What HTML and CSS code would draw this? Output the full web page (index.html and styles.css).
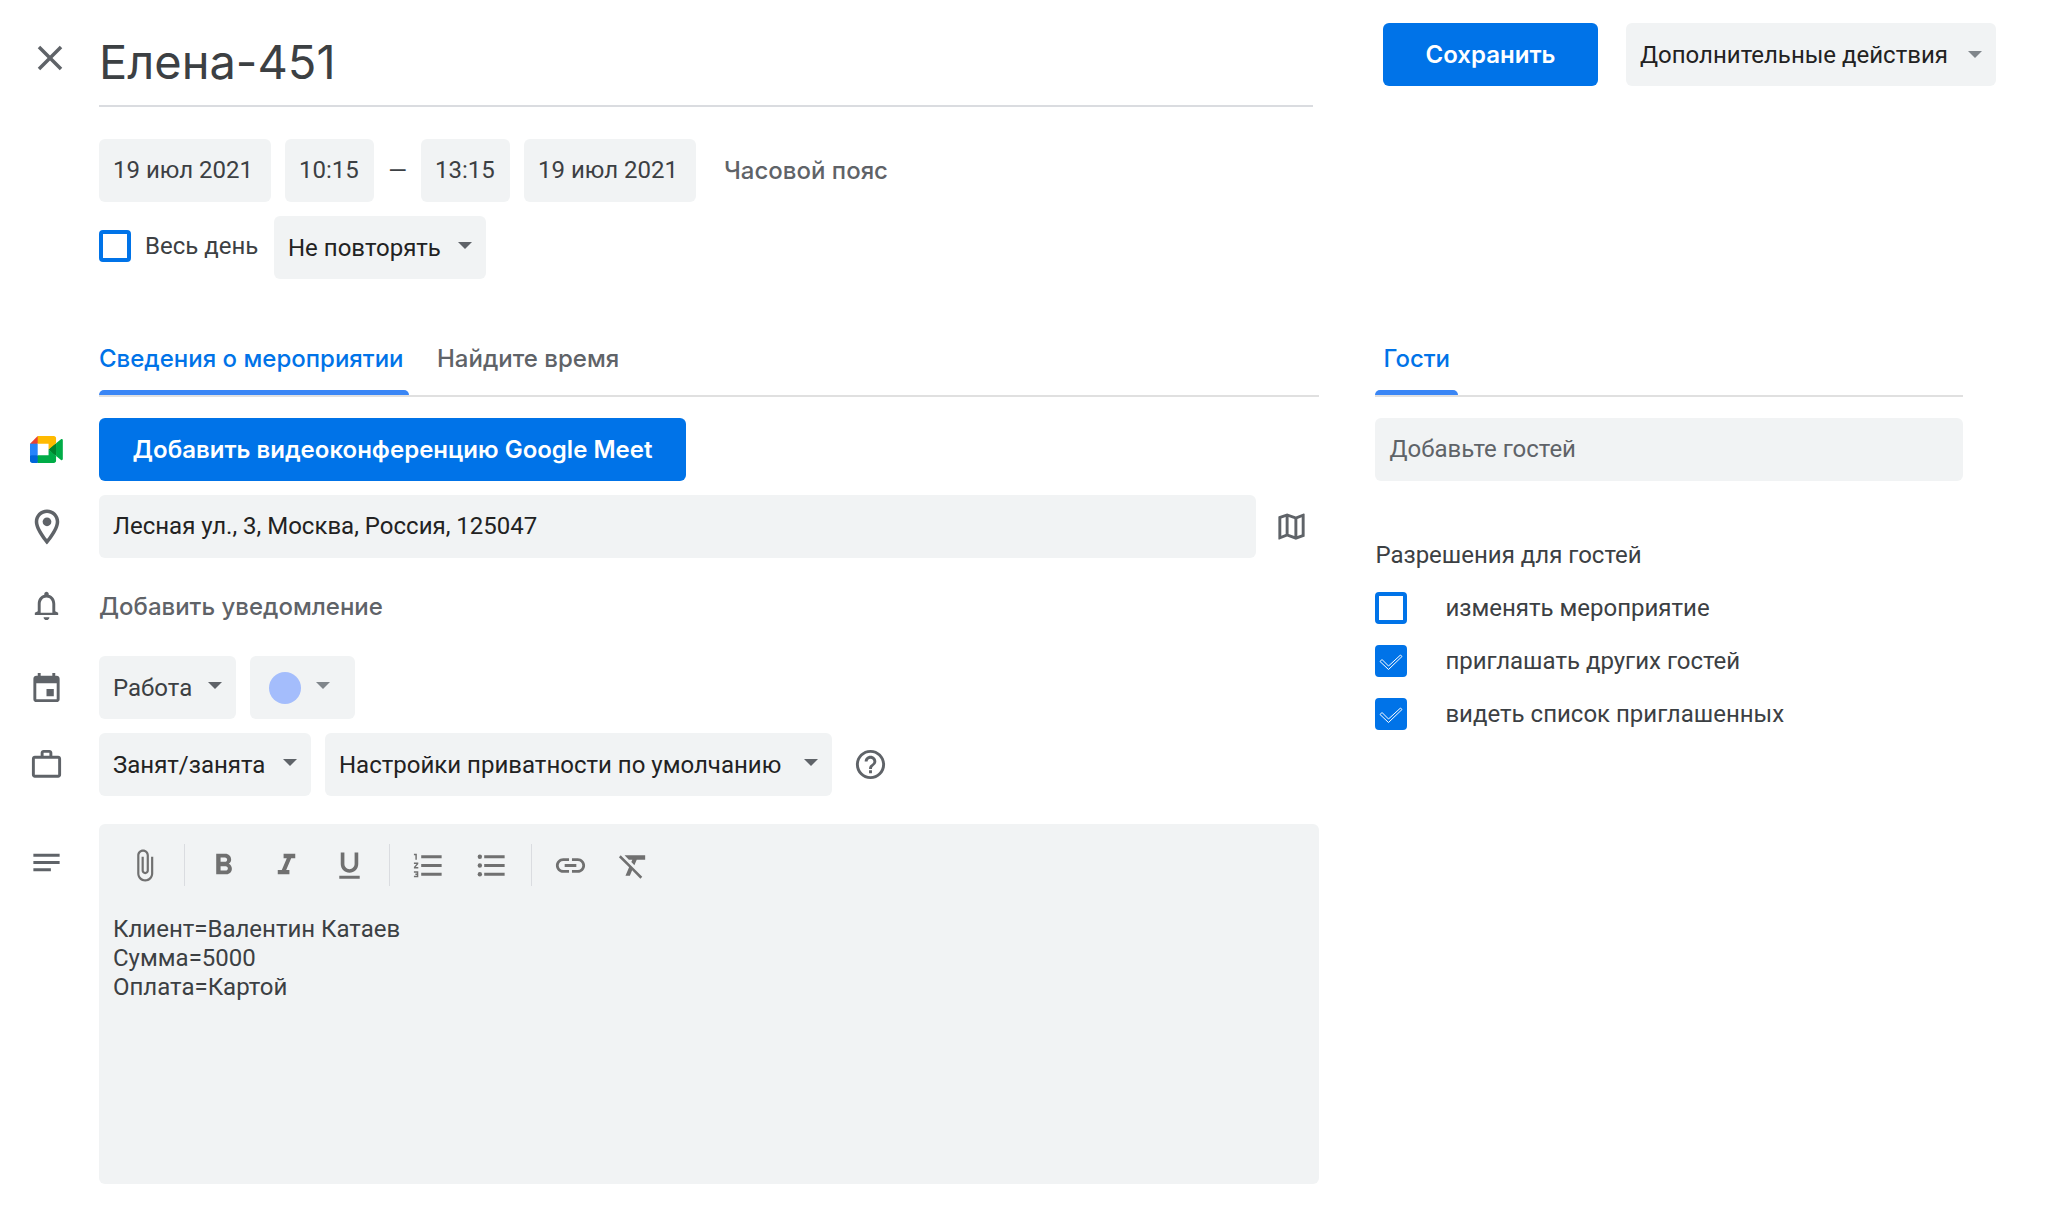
FILE: index.html
```html
<!DOCTYPE html>
<html lang="ru">
<head>
<meta charset="utf-8">
<meta name="viewport" content="width=device-width, initial-scale=1">
<title>Елена-451</title>
<link rel="stylesheet" href="styles.css">
</head>
<body>
<form class="event">
  <header class="header">
    <button class="icon-button close" type="button" aria-label="Закрыть">
      <svg class="icon icon-large" viewBox="0 0 24 24"><path d="M19 6.41L17.59 5 12 10.59 6.41 5 5 6.41 10.59 12 5 17.59 6.41 19 12 13.41 17.59 19 19 17.59 13.41 12z"/></svg>
    </button>
    <input class="title" type="text" value="Елена-451" aria-label="Название">
    <div class="actions">
      <button class="button button-save" type="submit">Сохранить</button>
      <div class="select select-actions">
        <select aria-label="Дополнительные действия"><option>Дополнительные действия</option></select>
      </div>
    </div>
  </header>

  <section class="schedule">
    <div class="line">
      <input class="field date" type="text" value="19 июл 2021" aria-label="Дата начала">
      <input class="field time" type="text" value="10:15" aria-label="Время начала">
      <span class="dash">—</span>
      <input class="field time" type="text" value="13:15" aria-label="Время окончания">
      <input class="field date" type="text" value="19 июл 2021" aria-label="Дата окончания">
      <button class="text-button timezone" type="button">Часовой пояс</button>
    </div>
    <div class="line">
      <label class="all-day">
        <span class="check"><input type="checkbox"></span>
        <span>Весь день</span>
      </label>
      <div class="select select-short">
        <select aria-label="Повторение"><option>Не повторять</option></select>
      </div>
    </div>
  </section>

  <div class="columns">
    <section class="details">
      <nav class="tabs">
        <a class="tab tab-active tab-details" href="#details">Сведения о мероприятии</a>
        <a class="tab" href="#time">Найдите время</a>
      </nav>

      <div class="row">
        <svg class="meet-logo" viewBox="0 0 88 72">
          <path fill="#00832d" d="M49.5 36l8.53 9.75 11.47 7.33 2-17.02-2-16.64-11.69 6.44z"/>
          <path fill="#0066da" d="M0 51.5V66c0 3.315 2.685 6 6 6h14.5l3-10.96-3-9.54-9.95-3z"/>
          <path fill="#e94235" d="M20.5 0L0 20.5l10.55 3 9.95-3 2.95-9.41z"/>
          <path fill="#2684fc" d="M20.5 20.5H0v31h20.5z"/>
          <path fill="#00ac47" d="M82.6 8.68L69.5 19.42v33.66l13.16 10.79c1.97 1.54 4.85.135 4.85-2.37V11c0-2.535-2.945-3.925-4.91-2.32zM49.5 36v15.5h-29V72h43c3.315 0 6-2.685 6-6V53.08z"/>
          <path fill="#ffba00" d="M63.5 0h-43v20.5h29V36l20-16.57V6c0-3.315-2.685-6-6-6z"/>
        </svg>
        <button class="button button-meet" type="button">Добавить видеоконференцию Google Meet</button>
      </div>

      <div class="row">
        <svg class="icon icon-large" viewBox="0 0 24 24"><path d="M12 2C8.13 2 5 5.13 5 9c0 5.25 7 13 7 13s7-7.75 7-13c0-3.87-3.13-7-7-7zM7 9c0-2.76 2.24-5 5-5s5 2.24 5 5c0 2.88-2.88 7.19-5 9.88C9.92 16.21 7 11.85 7 9z"/><circle cx="12" cy="9" r="2.5"/></svg>
        <div class="line location">
          <input class="field" type="text" value="Лесная ул., 3, Москва, Россия, 125047" aria-label="Место">
          <button class="icon-button map" type="button" aria-label="Показать на карте">
            <svg class="icon" viewBox="0 0 24 24"><path d="M20.5 3l-.16.03L15 5.1 9 3 3.36 4.9c-.21.07-.36.25-.36.48V20.5c0 .28.22.5.5.5l.16-.03L9 18.9l6 2.1 5.64-1.9c.21-.07.36-.25.36-.48V3.5c0-.28-.22-.5-.5-.5zM10 5.47l4 1.4v11.66l-4-1.4V5.47zm-5 .99l3-1.01v11.7l-3 1.16V6.46zm14 11.08l-3 1.01V6.86l3-1.16v11.84z"/></svg>
          </button>
        </div>
      </div>

      <div class="row row-notification">
        <svg class="icon" viewBox="0 0 24 24"><path d="M12 22c1.1 0 2-.9 2-2h-4c0 1.1.9 2 2 2zm6-6v-5c0-3.07-1.63-5.64-4.5-6.32V4c0-.83-.67-1.5-1.5-1.5s-1.5.67-1.5 1.5v.68C7.64 5.36 6 7.92 6 11v5l-2 1v1.5h16V17l-2-1zm-2 1H8v-6c0-2.48 1.51-4.5 4-4.5s4 2.02 4 4.5v6z"/></svg>
        <button class="text-button" type="button">Добавить уведомление</button>
      </div>

      <div class="row">
        <svg class="icon" viewBox="0 0 24 24"><path d="M19 4h-1V2h-2v2H8V2H6v2H5c-1.11 0-1.99.9-1.99 2L3 20c0 1.1.89 2 2 2h14c1.1 0 2-.9 2-2V6c0-1.1-.9-2-2-2zm0 16H5V9h14v11zm-7-7h5v5h-5z"/></svg>
        <div class="line">
          <div class="select select-calendar">
            <select aria-label="Календарь"><option>Работа</option></select>
          </div>
          <button class="color-picker" type="button" aria-label="Цвет мероприятия" aria-haspopup="listbox">
            <span class="swatch"></span>
            <span class="arrow"></span>
          </button>
        </div>
      </div>

      <div class="row">
        <svg class="icon" viewBox="0 0 24 24"><path d="M14 6V4h-4v2h4zM4 8v11h16V8H4zm16-2c1.11 0 2 .89 2 2v11c0 1.11-.89 2-2 2H4c-1.11 0-2-.89-2-2l.01-11c0-1.11.88-2 1.99-2h4V4c0-1.11.89-2 2-2h4c1.11 0 2 .89 2 2v2h4z"/></svg>
        <div class="line">
          <div class="select select-short">
            <select aria-label="Доступность"><option>Занят/занята</option></select>
          </div>
          <div class="select select-privacy">
            <select aria-label="Приватность"><option>Настройки приватности по умолчанию</option></select>
          </div>
          <button class="icon-button help" type="button" aria-label="Справка">
            <svg class="icon" viewBox="0 0 24 24"><path d="M11 18h2v-2h-2v2zm1-16C6.48 2 2 6.48 2 12s4.48 10 10 10 10-4.48 10-10S17.52 2 12 2zm0 18c-4.41 0-8-3.59-8-8s3.59-8 8-8 8 3.59 8 8-3.59 8-8 8zm0-14c-2.21 0-4 1.79-4 4h2c0-1.1.9-2 2-2s2 .9 2 2c0 2-3 1.75-3 5h2c0-2.25 3-2.5 3-5 0-2.21-1.79-4-4-4z"/></svg>
          </button>
        </div>
      </div>

      <div class="row row-description">
        <svg class="icon" viewBox="0 0 24 24"><path d="M3 18h12v-2H3v2zM3 6v2h18V6H3zm0 7h18v-2H3v2z"/></svg>
        <div class="editor">
          <div class="toolbar">
            <button class="tool" type="button" aria-label="Прикрепить файл"><svg class="icon" viewBox="0 0 24 24"><path d="M16.5 6v11.5c0 2.21-1.79 4-4 4s-4-1.79-4-4V5c0-1.38 1.12-2.5 2.5-2.5s2.5 1.12 2.5 2.5v10.5c0 .55-.45 1-1 1s-1-.45-1-1V6H10v9.5c0 1.38 1.12 2.5 2.5 2.5s2.5-1.12 2.5-2.5V5c0-2.21-1.79-4-4-4S7 2.79 7 5v12.5c0 3.04 2.46 5.5 5.5 5.5s5.5-2.46 5.5-5.5V6h-1.5z"/></svg></button>
            <span class="divider"></span>
            <button class="tool" type="button" aria-label="Полужирный"><svg class="icon" viewBox="0 0 24 24"><path d="M15.6 10.79c.97-.67 1.65-1.77 1.65-2.79 0-2.26-1.75-4-4-4H7v14h7.04c2.09 0 3.71-1.7 3.71-3.79 0-1.52-.86-2.82-2.15-3.42zM10 6.5h3c.83 0 1.5.67 1.5 1.5s-.67 1.5-1.5 1.5h-3v-3zm3.5 9H10v-3h3.5c.83 0 1.5.67 1.5 1.5s-.67 1.5-1.5 1.5z"/></svg></button>
            <button class="tool" type="button" aria-label="Курсив"><svg class="icon" viewBox="0 0 24 24"><path d="M10 4v3h2.21l-3.42 8H6v3h8v-3h-2.21l3.42-8H18V4z"/></svg></button>
            <button class="tool" type="button" aria-label="Подчеркнутый"><svg class="icon" viewBox="0 0 24 24"><path d="M12 17c3.31 0 6-2.69 6-6V3h-2.5v8c0 1.93-1.57 3.5-3.5 3.5S8.5 12.93 8.5 11V3H6v8c0 3.31 2.69 6 6 6zm-7 2v2h14v-2H5z"/></svg></button>
            <span class="divider"></span>
            <button class="tool" type="button" aria-label="Нумерованный список"><svg class="icon" viewBox="0 0 24 24"><path d="M2 17h2v.5H3v1h1v.5H2v1h3v-4H2v1zm1-9h1V4H2v1h1v3zm-1 3h1.8L2 13.1v.9h3v-1H3.2L5 10.9V10H2v1zm5-6v2h14V5H7zm0 14h14v-2H7v2zm0-6h14v-2H7v2z"/></svg></button>
            <button class="tool" type="button" aria-label="Маркированный список"><svg class="icon" viewBox="0 0 24 24"><path d="M7 19h14v-2H7v2zm0-6h14v-2H7v2zm0-8v2h14V5H7z"/><circle cx="4" cy="6" r="1.5"/><circle cx="4" cy="12" r="1.5"/><circle cx="4" cy="18" r="1.5"/></svg></button>
            <span class="divider"></span>
            <button class="tool" type="button" aria-label="Вставить ссылку"><svg class="icon" viewBox="0 0 24 24"><path d="M3.9 12c0-1.71 1.39-3.1 3.1-3.1h4V7H7c-2.76 0-5 2.24-5 5s2.24 5 5 5h4v-1.9H7c-1.71 0-3.1-1.39-3.1-3.1zM8 13h8v-2H8v2zm9-6h-4v1.9h4c1.71 0 3.1 1.39 3.1 3.1s-1.39 3.1-3.1 3.1h-4V17h4c2.76 0 5-2.24 5-5s-2.24-5-5-5z"/></svg></button>
            <button class="tool" type="button" aria-label="Удалить форматирование"><svg class="icon" viewBox="0 0 24 24"><path d="M3.27 5L2 6.27l6.97 6.97L6.5 19h3l1.57-3.66L16.73 21 18 19.73 3.55 5.27 3.27 5zM6 5v.18L8.82 8h2.4l-.72 1.68 2.1 2.1L14.21 8H20V5H6z"/></svg></button>
          </div>
          <textarea class="description" rows="9" aria-label="Описание">Клиент=Валентин Катаев
Сумма=5000
Оплата=Картой</textarea>
        </div>
      </div>
    </section>

    <section class="guests">
      <nav class="tabs">
        <a class="tab tab-active tab-guests" href="#guests">Гости</a>
      </nav>
      <input class="field" type="text" placeholder="Добавьте гостей" aria-label="Добавьте гостей">
      <fieldset class="permissions">
        <legend>Разрешения для гостей</legend>
        <label class="permission">
          <span class="check"><input type="checkbox"></span>
          <span>изменять мероприятие</span>
        </label>
        <label class="permission">
          <span class="check"><input type="checkbox" checked><svg viewBox="0 0 32 32"><path d="M5 16.5L7 14.5 13.5 21 25.5 10 27 11.5 13.5 24.5z"/></svg></span>
          <span>приглашать других гостей</span>
        </label>
        <label class="permission">
          <span class="check"><input type="checkbox" checked><svg viewBox="0 0 32 32"><path d="M5 16.5L7 14.5 13.5 21 25.5 10 27 11.5 13.5 24.5z"/></svg></span>
          <span>видеть список приглашенных</span>
        </label>
      </fieldset>
    </section>
  </div>
</form>
</body>
</html>
```
FILE: styles.css
```css
:root {
  --blue: #0073e8;
  --indicator: #3a86f5;
  --surface: #f1f3f4;
  --text: #3c4043;
  --text-dark: #222;
  --text-muted: #5f6368;
  --rule: #dadce0;
  --rail: 99px;
  --control: 63px;
}

* { box-sizing: border-box; }

body {
  margin: 0;
  background: #fff;
  color: var(--text);
  font: 24px/32px Roboto, sans-serif;
}

button, input, select, textarea {
  margin: 0;
  padding: 0;
  border: 0;
  background: none;
  color: inherit;
  font: inherit;
}

button, select { cursor: pointer; }

.icon {
  display: block;
  flex: none;
  width: 35px;
  height: 35px;
  fill: var(--text-muted);
}

.icon-large { width: 42px; height: 42px; }

.icon-button { flex: none; }

.line {
  display: flex;
  align-items: center;
  gap: 14px;
}

/* Controls */

.field {
  width: 100%;
  height: var(--control);
  padding: 0 14px 2px;
  border-radius: 6px;
  background: var(--surface);
  color: var(--text-dark);
}

.field::placeholder { color: var(--text-muted); opacity: 1; }

.button {
  height: var(--control);
  border-radius: 6px;
  background: var(--blue);
  color: #fff;
  font: 600 24px/32px Inter, sans-serif;
}

.text-button {
  color: var(--text-muted);
  font: 500 24px/32px Inter, sans-serif;
}

.select { position: relative; }

.select select {
  width: 100%;
  height: var(--control);
  padding: 0 42px 0 14px;
  border-radius: 6px;
  background: var(--surface);
  color: var(--text-dark);
  appearance: none;
}

.select::after,
.arrow {
  border: 7px solid transparent;
  border-top-color: var(--text-muted);
  border-bottom: 0;
}

.select::after {
  content: "";
  position: absolute;
  top: 26px;
  right: 14px;
  pointer-events: none;
}

.select-short { width: 212px; }
.select-calendar { width: 137px; }
.select-calendar select { color: var(--text); }
.select-privacy { width: 507px; }
.select-actions { width: 370px; }
.select-actions::after { top: 28px; border-top-color: #80868b; }

.check {
  display: grid;
  flex: none;
  width: 32px;
  height: 32px;
}

.check > * { grid-area: 1 / 1; }

.check input {
  width: 32px;
  height: 32px;
  border: 4px solid var(--blue);
  border-radius: 4px;
  appearance: none;
}

.check input:checked { background: var(--blue); }

.check svg {
  fill: none;
  stroke: #fff;
  stroke-width: 1;
  pointer-events: none;
}

/* Header */

.header {
  display: flex;
  align-items: flex-start;
  padding: 23px 50px 0 0;
}

.close {
  width: var(--rail);
  padding: 14px 0 0 29px;
}

.title {
  flex: 1;
  min-width: 0;
  height: 84px;
  padding: 0 0 6px;
  border-bottom: 2px solid var(--rule);
  font: 47px/72px Inter, sans-serif;
}

.actions {
  display: flex;
  gap: 28px;
  margin-left: 70px;
}

.button-save { padding: 0 42px; width: 215px; }

/* Date and time */

.schedule {
  display: grid;
  gap: 14px;
  padding: 32px 0 0 var(--rail);
}

.date, .time { color: var(--text); }
.date { width: 172px; }
.time { width: 89px; }
.dash {
  display: flex;
  justify-content: center;
  width: 19px;
}
.timezone { margin-left: 14px; }

.all-day {
  display: flex;
  align-items: center;
  gap: 14px;
  width: 161px;
  padding-bottom: 4px;
}

/* Columns */

.columns {
  display: grid;
  grid-template-columns: minmax(0, 27fr) minmax(0, 13fr);
  column-gap: 56px;
  align-items: start;
  padding: 50px 83px 22px var(--rail);
}

.tabs {
  display: flex;
  gap: 28px;
  margin-bottom: 21px;
  border-bottom: 2px solid #e0e0e0;
}

.tab {
  position: relative;
  padding: 14px 0 20px;
  color: var(--text-muted);
  font: 500 24px/32px Inter, sans-serif;
  text-decoration: none;
}

.tab-active { color: var(--blue); }

.tab-active::after {
  content: "";
  position: absolute;
  inset: auto 0 0;
  height: 5px;
  border-radius: 5px 5px 0 0;
  background: var(--indicator);
}

.tab-details { min-width: 310px; }
.tab-guests { padding-inline: 8px; }

.row {
  display: grid;
  grid-template-columns: var(--rail) minmax(0, 1fr);
  align-items: center;
  justify-items: start;
  margin: 0 0 14px calc(-1 * var(--rail));
}

.row > svg { justify-self: center; margin-right: 6px; }
.row > .line { width: 100%; }

.meet-logo { width: 33px; height: 27px; }
.button-meet { padding: 0 28px; width: 587px; }

.location { gap: 0; }
.map { padding: 0 10px 0 18px; }

.row-notification { height: 70px; }
.row-notification > .icon { margin-bottom: 4px; }

.color-picker {
  display: flex;
  align-items: center;
  gap: 15px;
  width: 105px;
  height: var(--control);
  padding-left: 19px;
  border-radius: 6px;
  background: var(--surface);
}

.swatch {
  width: 32px;
  height: 32px;
  border-radius: 50%;
  background: #a4bdfc;
}

.arrow { margin-bottom: 4px; border-top-color: #80868b; }

.help { padding-left: 7px; }

/* Description */

.row-description {
  align-items: start;
  margin-top: 28px;
  margin-bottom: 0;
}

.row-description > .icon { margin-top: 21px; }

.editor {
  width: 100%;
  padding-top: 20px;
  border-radius: 6px;
  background: var(--surface);
}

.toolbar {
  display: flex;
  align-items: center;
  height: 42px;
  padding-left: 14px;
}

.tool {
  display: grid;
  place-items: center;
  width: 63px;
  height: 42px;
}

.tool .icon { fill: #707070; }

.divider {
  width: 1px;
  height: 42px;
  margin: 0 7px 0 8px;
  background: var(--rule);
}

.description {
  display: block;
  width: 100%;
  margin-top: 29px;
  padding: 0 14px 8px;
  line-height: 29px;
  resize: none;
}

/* Guests */

.permissions {
  display: grid;
  gap: 21px;
  margin: 58px 0 0;
  padding: 0;
  border: 0;
}

.permissions legend { margin-bottom: 21px; padding: 0; }

.permission {
  display: flex;
  align-items: center;
  gap: 38px;
}
```
